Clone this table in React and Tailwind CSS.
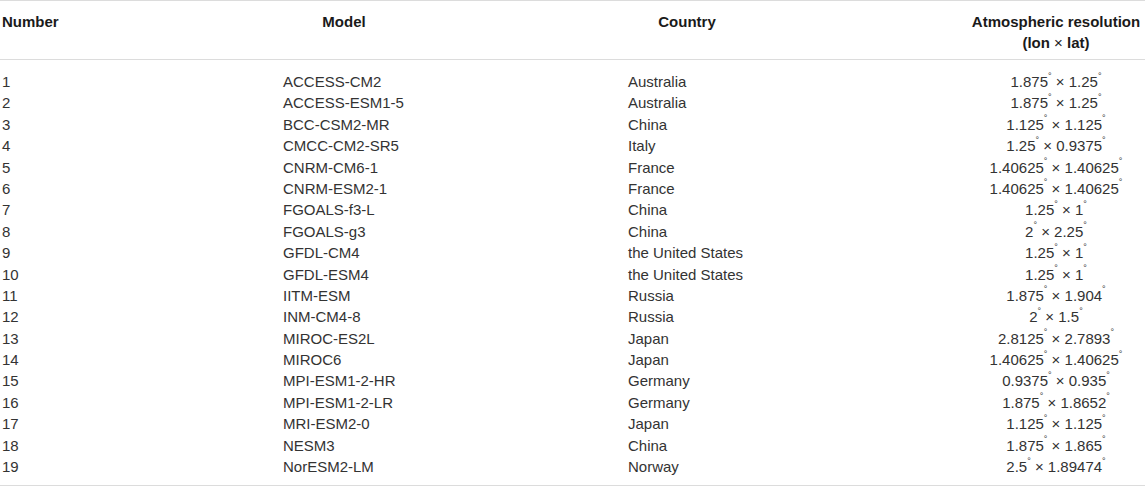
import React from "react";

const rows = [
  ["1", "ACCESS-CM2", "Australia", "1.875° × 1.25°"],
  ["2", "ACCESS-ESM1-5", "Australia", "1.875° × 1.25°"],
  ["3", "BCC-CSM2-MR", "China", "1.125° × 1.125°"],
  ["4", "CMCC-CM2-SR5", "Italy", "1.25° × 0.9375°"],
  ["5", "CNRM-CM6-1", "France", "1.40625° × 1.40625°"],
  ["6", "CNRM-ESM2-1", "France", "1.40625° × 1.40625°"],
  ["7", "FGOALS-f3-L", "China", "1.25° × 1°"],
  ["8", "FGOALS-g3", "China", "2° × 2.25°"],
  ["9", "GFDL-CM4", "the United States", "1.25° × 1°"],
  ["10", "GFDL-ESM4", "the United States", "1.25° × 1°"],
  ["11", "IITM-ESM", "Russia", "1.875° × 1.904°"],
  ["12", "INM-CM4-8", "Russia", "2° × 1.5°"],
  ["13", "MIROC-ES2L", "Japan", "2.8125° × 2.7893°"],
  ["14", "MIROC6", "Japan", "1.40625° × 1.40625°"],
  ["15", "MPI-ESM1-2-HR", "Germany", "0.9375° × 0.935°"],
  ["16", "MPI-ESM1-2-LR", "Germany", "1.875° × 1.8652°"],
  ["17", "MRI-ESM2-0", "Japan", "1.125° × 1.125°"],
  ["18", "NESM3", "China", "1.875° × 1.865°"],
  ["19", "NorESM2-LM", "Norway", "2.5° × 1.89474°"],
];

function Res({ text }) {
  const parts = text.split("°");
  return (
    <span>
      {parts.map((p, i) => (
        <React.Fragment key={i}>
          {p}
          {i < parts.length - 1 && <sup className="text-[9px] align-[4px] leading-none">°</sup>}
        </React.Fragment>
      ))}
    </span>
  );
}

export default function App() {
  return (
    <div
      className="w-[1145px] h-[487px] bg-white text-[15px] text-[#333]"
      style={{ fontFamily: '"Liberation Sans", Arial, sans-serif' }}
    >
      <div className="border-t border-[#dcdcdc] border-b pt-[10px] pb-[6px] grid grid-cols-[283px_345px_337px_1fr] font-bold text-[#1a1a1a] leading-[21px]">
        <div className="pl-[2px]">Number</div>
        <div className="w-[122px] text-center">Model</div>
        <div className="w-[118px] text-center">Country</div>
        <div className="text-center pl-[2px]">
          Atmospheric resolution
          <br />
          (lon <span className="font-normal">×</span> lat)
        </div>
      </div>
      <div className="pt-[11px] pb-[8px] border-b border-[#dcdcdc]">
        {rows.map((r) => (
          <div key={r[0]} className="grid grid-cols-[283px_345px_337px_1fr] h-[21.4px] leading-[21.4px]">
            <div className="pl-[2px]">{r[0]}</div>
            <div>{r[1]}</div>
            <div>{r[2]}</div>
            <div className="text-center pl-[2px]">
              <Res text={r[3]} />
            </div>
          </div>
        ))}
      </div>
    </div>
  );
}
